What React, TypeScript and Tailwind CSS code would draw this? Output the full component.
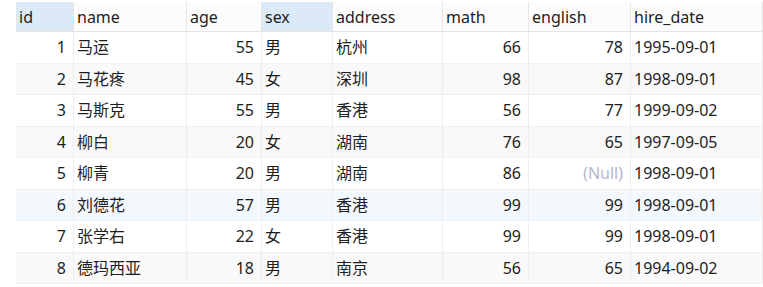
import React from "react";

type Row = {
  id: number;
  name: string;
  age: number;
  sex: string;
  address: string;
  math: number;
  english: number | null;
  hireDate: string;
};

const ROWS: Row[] = [
  { id: 1, name: "马运", age: 55, sex: "男", address: "杭州", math: 66, english: 78, hireDate: "1995-09-01" },
  { id: 2, name: "马花疼", age: 45, sex: "女", address: "深圳", math: 98, english: 87, hireDate: "1998-09-01" },
  { id: 3, name: "马斯克", age: 55, sex: "男", address: "香港", math: 56, english: 77, hireDate: "1999-09-02" },
  { id: 4, name: "柳白", age: 20, sex: "女", address: "湖南", math: 76, english: 65, hireDate: "1997-09-05" },
  { id: 5, name: "柳青", age: 20, sex: "男", address: "湖南", math: 86, english: null, hireDate: "1998-09-01" },
  { id: 6, name: "刘德花", age: 57, sex: "男", address: "香港", math: 99, english: 99, hireDate: "1998-09-01" },
  { id: 7, name: "张学右", age: 22, sex: "女", address: "香港", math: 99, english: 99, hireDate: "1998-09-01" },
  { id: 8, name: "德玛西亚", age: 18, sex: "男", address: "南京", math: 56, english: 65, hireDate: "1994-09-02" },
];

// column widths in px, same for header and body
const COLS = "grid grid-cols-[58px_113px_75px_71px_110px_86px_102px_1fr]";

function HeaderCell({ label, active }: { label: string; active?: boolean }) {
  return (
    <div
      className={
        "flex items-center pl-[3px] border-r border-[#e6e6e6] " +
        (active ? "bg-[#dce9f6]" : "bg-[#fcfcfc]")
      }
    >
      {label}
    </div>
  );
}

function Cell({ children, right }: { children: React.ReactNode; right?: boolean }) {
  return (
    <div
      className={
        "flex items-center border-r border-[#eeeeee] whitespace-nowrap " +
        (right ? "justify-end pr-[7px]" : "pl-[3px]")
      }
    >
      {children}
    </div>
  );
}

export default function App() {
  return (
    <div className="w-[763px] h-[287px] bg-white overflow-hidden pl-4 pt-[2px] text-[16px] text-[#1e1e1e] font-['Segoe_UI','Noto_Sans','Noto_Sans_CJK_SC',sans-serif]">
      <div className={COLS + " h-[30px] border-b border-[#e3e3e3]"}>
        <HeaderCell label="id" active />
        <HeaderCell label="name" />
        <HeaderCell label="age" />
        <HeaderCell label="sex" active />
        <HeaderCell label="address" />
        <HeaderCell label="math" />
        <HeaderCell label="english" />
        <HeaderCell label="hire_date" />
      </div>
      {ROWS.map((r, i) => (
        <div
          key={r.id}
          className={
            COLS +
            " h-[31.5px] border-b border-[#f0f0f0] " +
            (r.id === 6 ? "bg-[#f3f8fd]" : i % 2 === 0 ? "bg-white" : "bg-[#f9f9f9]")
          }
        >
          <Cell right>{r.id}</Cell>
          <Cell>{r.name}</Cell>
          <Cell right>{r.age}</Cell>
          <Cell>{r.sex}</Cell>
          <Cell>{r.address}</Cell>
          <Cell right>{r.math}</Cell>
          <Cell right>
            {r.english === null ? <span className="text-[#b4b8cc]">(Null)</span> : r.english}
          </Cell>
          <Cell>{r.hireDate}</Cell>
        </div>
      ))}
    </div>
  );
}
